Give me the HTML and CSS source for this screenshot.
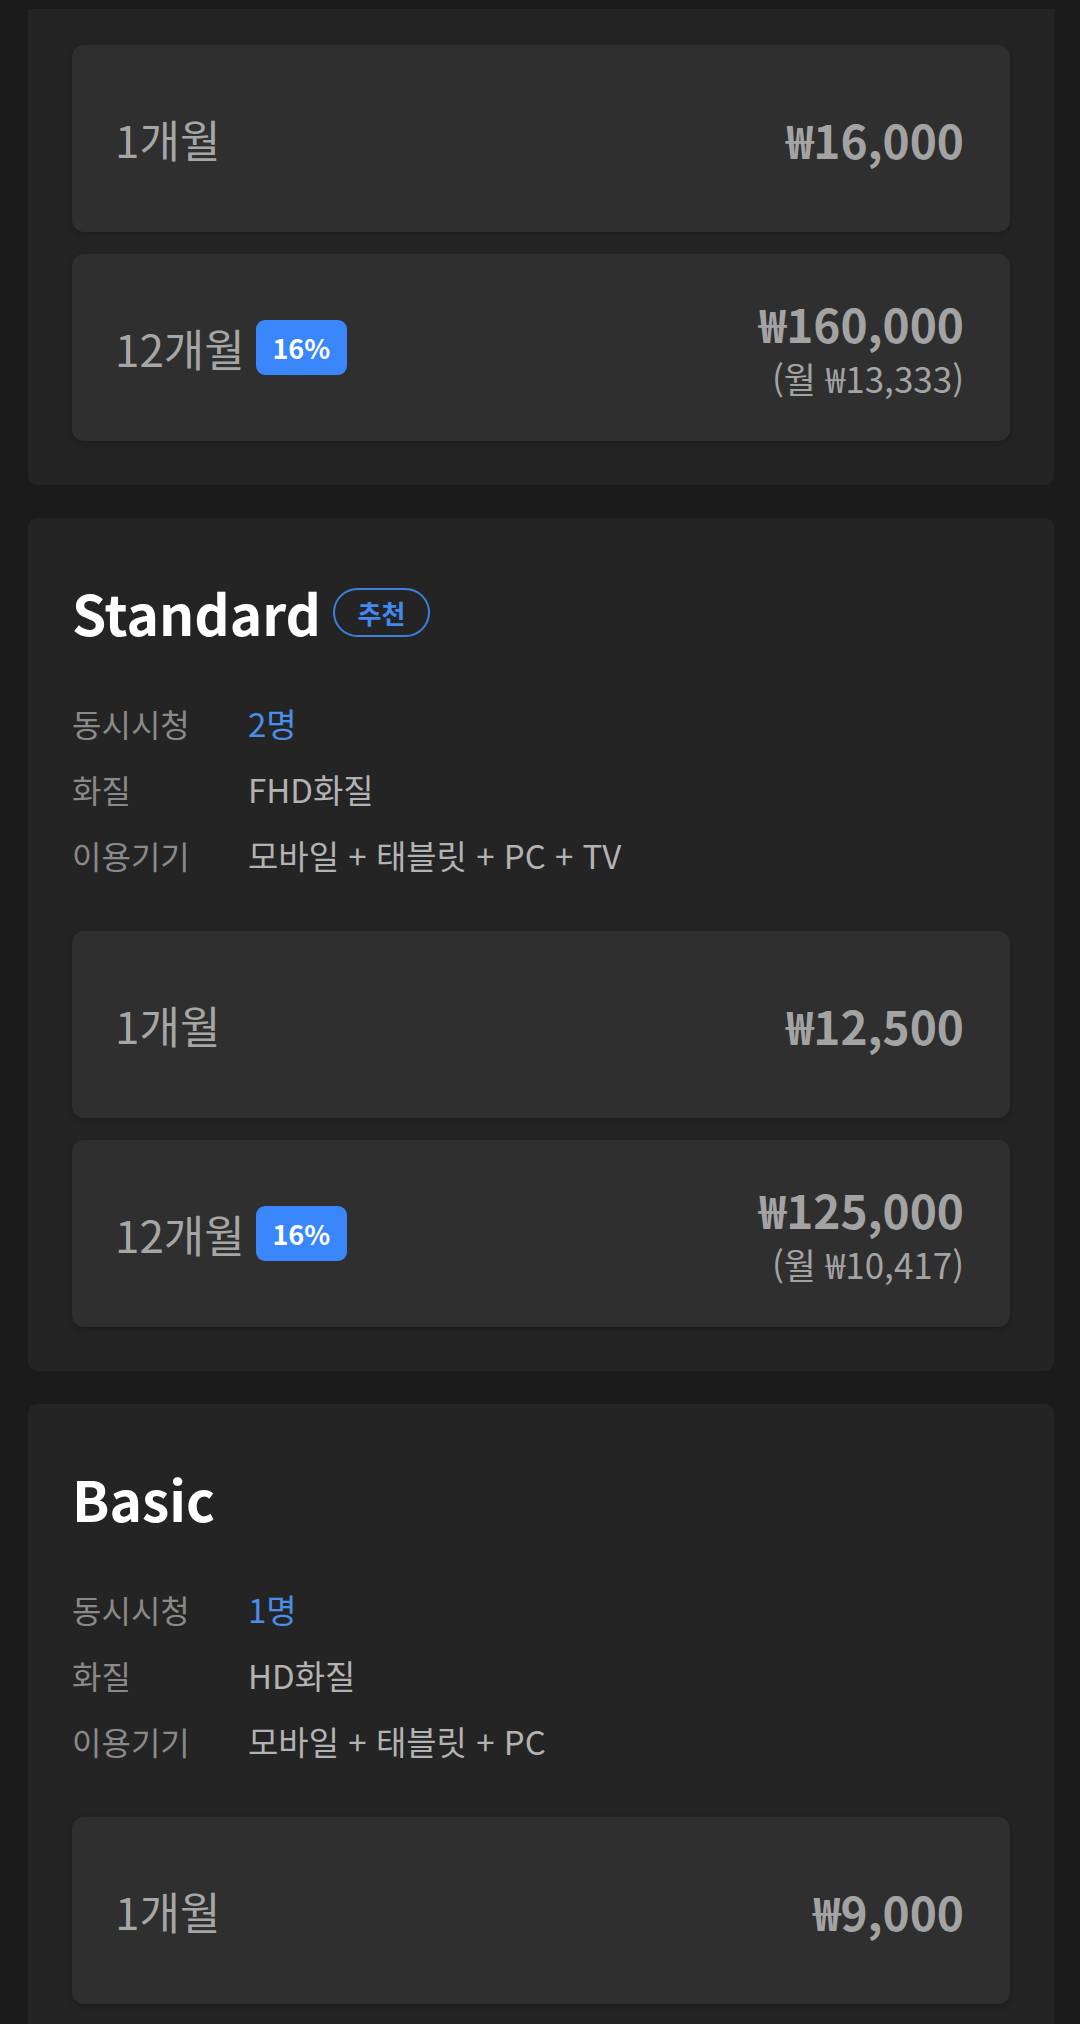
FILE: index.html
```html
<!DOCTYPE html>
<html lang="ko">
<head>
    <meta charset="UTF-8">
    <meta name="viewport" content="width=device-width, initial-scale=1.0">
    <title>이용권 선택</title>
    <link rel="stylesheet" href="styles.css">
</head>
<body>

    <div class="plan-list">

        <!-- Premium (스크롤로 위쪽이 잘린 상태) -->
        <section class="plan plan-cut">
            <div class="options">
                <div class="option">
                    <span class="period">1개월</span>
                    <div class="price-box">
                        <span class="price">₩16,000</span>
                    </div>
                </div>
                <div class="option">
                    <span class="period">12개월<span class="discount">16%</span></span>
                    <div class="price-box">
                        <span class="price">₩160,000</span>
                        <span class="monthly">(월 ₩13,333)</span>
                    </div>
                </div>
            </div>
        </section>

        <!-- Standard -->
        <section class="plan">
            <h2 class="plan-title">Standard <span class="tag">추천</span></h2>
            <dl class="specs">
                <dt>동시시청</dt>
                <dd class="accent">2명</dd>
                <dt>화질</dt>
                <dd>FHD화질</dd>
                <dt>이용기기</dt>
                <dd>모바일 + 태블릿 + PC + TV</dd>
            </dl>
            <div class="options">
                <div class="option">
                    <span class="period">1개월</span>
                    <div class="price-box">
                        <span class="price">₩12,500</span>
                    </div>
                </div>
                <div class="option">
                    <span class="period">12개월<span class="discount">16%</span></span>
                    <div class="price-box">
                        <span class="price">₩125,000</span>
                        <span class="monthly">(월 ₩10,417)</span>
                    </div>
                </div>
            </div>
        </section>

        <!-- Basic -->
        <section class="plan">
            <h2 class="plan-title">Basic</h2>
            <dl class="specs">
                <dt>동시시청</dt>
                <dd class="accent">1명</dd>
                <dt>화질</dt>
                <dd>HD화질</dd>
                <dt>이용기기</dt>
                <dd>모바일 + 태블릿 + PC</dd>
            </dl>
            <div class="options">
                <div class="option">
                    <span class="period">1개월</span>
                    <div class="price-box">
                        <span class="price">₩9,000</span>
                    </div>
                </div>
            </div>
        </section>

    </div>

</body>
</html>
```

FILE: styles.css
```css
* {
    margin: 0;
    padding: 0;
    box-sizing: border-box;
    font-family: "Noto Sans CJK KR", "Noto Sans", sans-serif;
}

body {
    background-color: #1b1b1b;
    color: white;
    overflow: hidden;
}

.plan-list {
    display: flex;
    flex-direction: column;
    gap: 33px;
    padding: 9px 26px 0 28px;
}

/* 요금제 카드 */
.plan {
    background-color: #242424;
    border-radius: 9px;
    padding: 44px;
}

.plan-cut {
    padding-top: 36px;
    border-top-left-radius: 0;
    border-top-right-radius: 0;
}

.plan-title {
    display: flex;
    align-items: center;
    gap: 12px;
    margin-top: 10px;
    font-size: 55px;
    font-weight: 700;
    line-height: 81px;
    color: white;
}

.tag {
    display: inline-flex;
    align-items: center;
    justify-content: center;
    width: 97px;
    height: 49px;
    border: 2px solid #3d7fdf;
    border-radius: 25px;
    color: #4388ec;
    font-size: 26px;
    font-weight: 700;
    line-height: 1;
}

/* 상세 정보 */
.specs {
    display: grid;
    grid-template-columns: 176px 1fr;
    margin-top: 37px;
    font-size: 32px;
    line-height: 66px;
}

.specs dt {
    color: #8a8a8a;
}

.specs dd {
    font-size: 33px;
    color: #b3b3b3;
}

.specs dd.accent {
    color: #4a8ee8;
}

/* 결제 옵션 */
.options {
    display: flex;
    flex-direction: column;
    gap: 22px;
}

.specs + .options {
    margin-top: 43px;
}

.option {
    display: flex;
    justify-content: space-between;
    align-items: center;
    height: 187px;
    padding: 0 46px 0 43px;
    background-color: #2f2f2f;
    border-radius: 12px;
    box-shadow: 0 2px 6px rgba(0, 0, 0, 0.25);
}

.period {
    display: flex;
    align-items: center;
    gap: 11px;
    font-size: 44px;
    color: #a6a6a6;
}

.discount {
    display: inline-flex;
    align-items: center;
    justify-content: center;
    width: 91px;
    height: 55px;
    background-color: #3a87fb;
    border-radius: 9px;
    color: white;
    font-size: 27px;
    font-weight: 700;
    line-height: 1;
}

.price-box {
    display: flex;
    flex-direction: column;
    align-items: flex-end;
}

.price {
    font-size: 46px;
    font-weight: 700;
    line-height: 60px;
    color: #a3a3a3;
}

.monthly {
    font-size: 35px;
    line-height: 50px;
    color: #a3a3a3;
}
```
